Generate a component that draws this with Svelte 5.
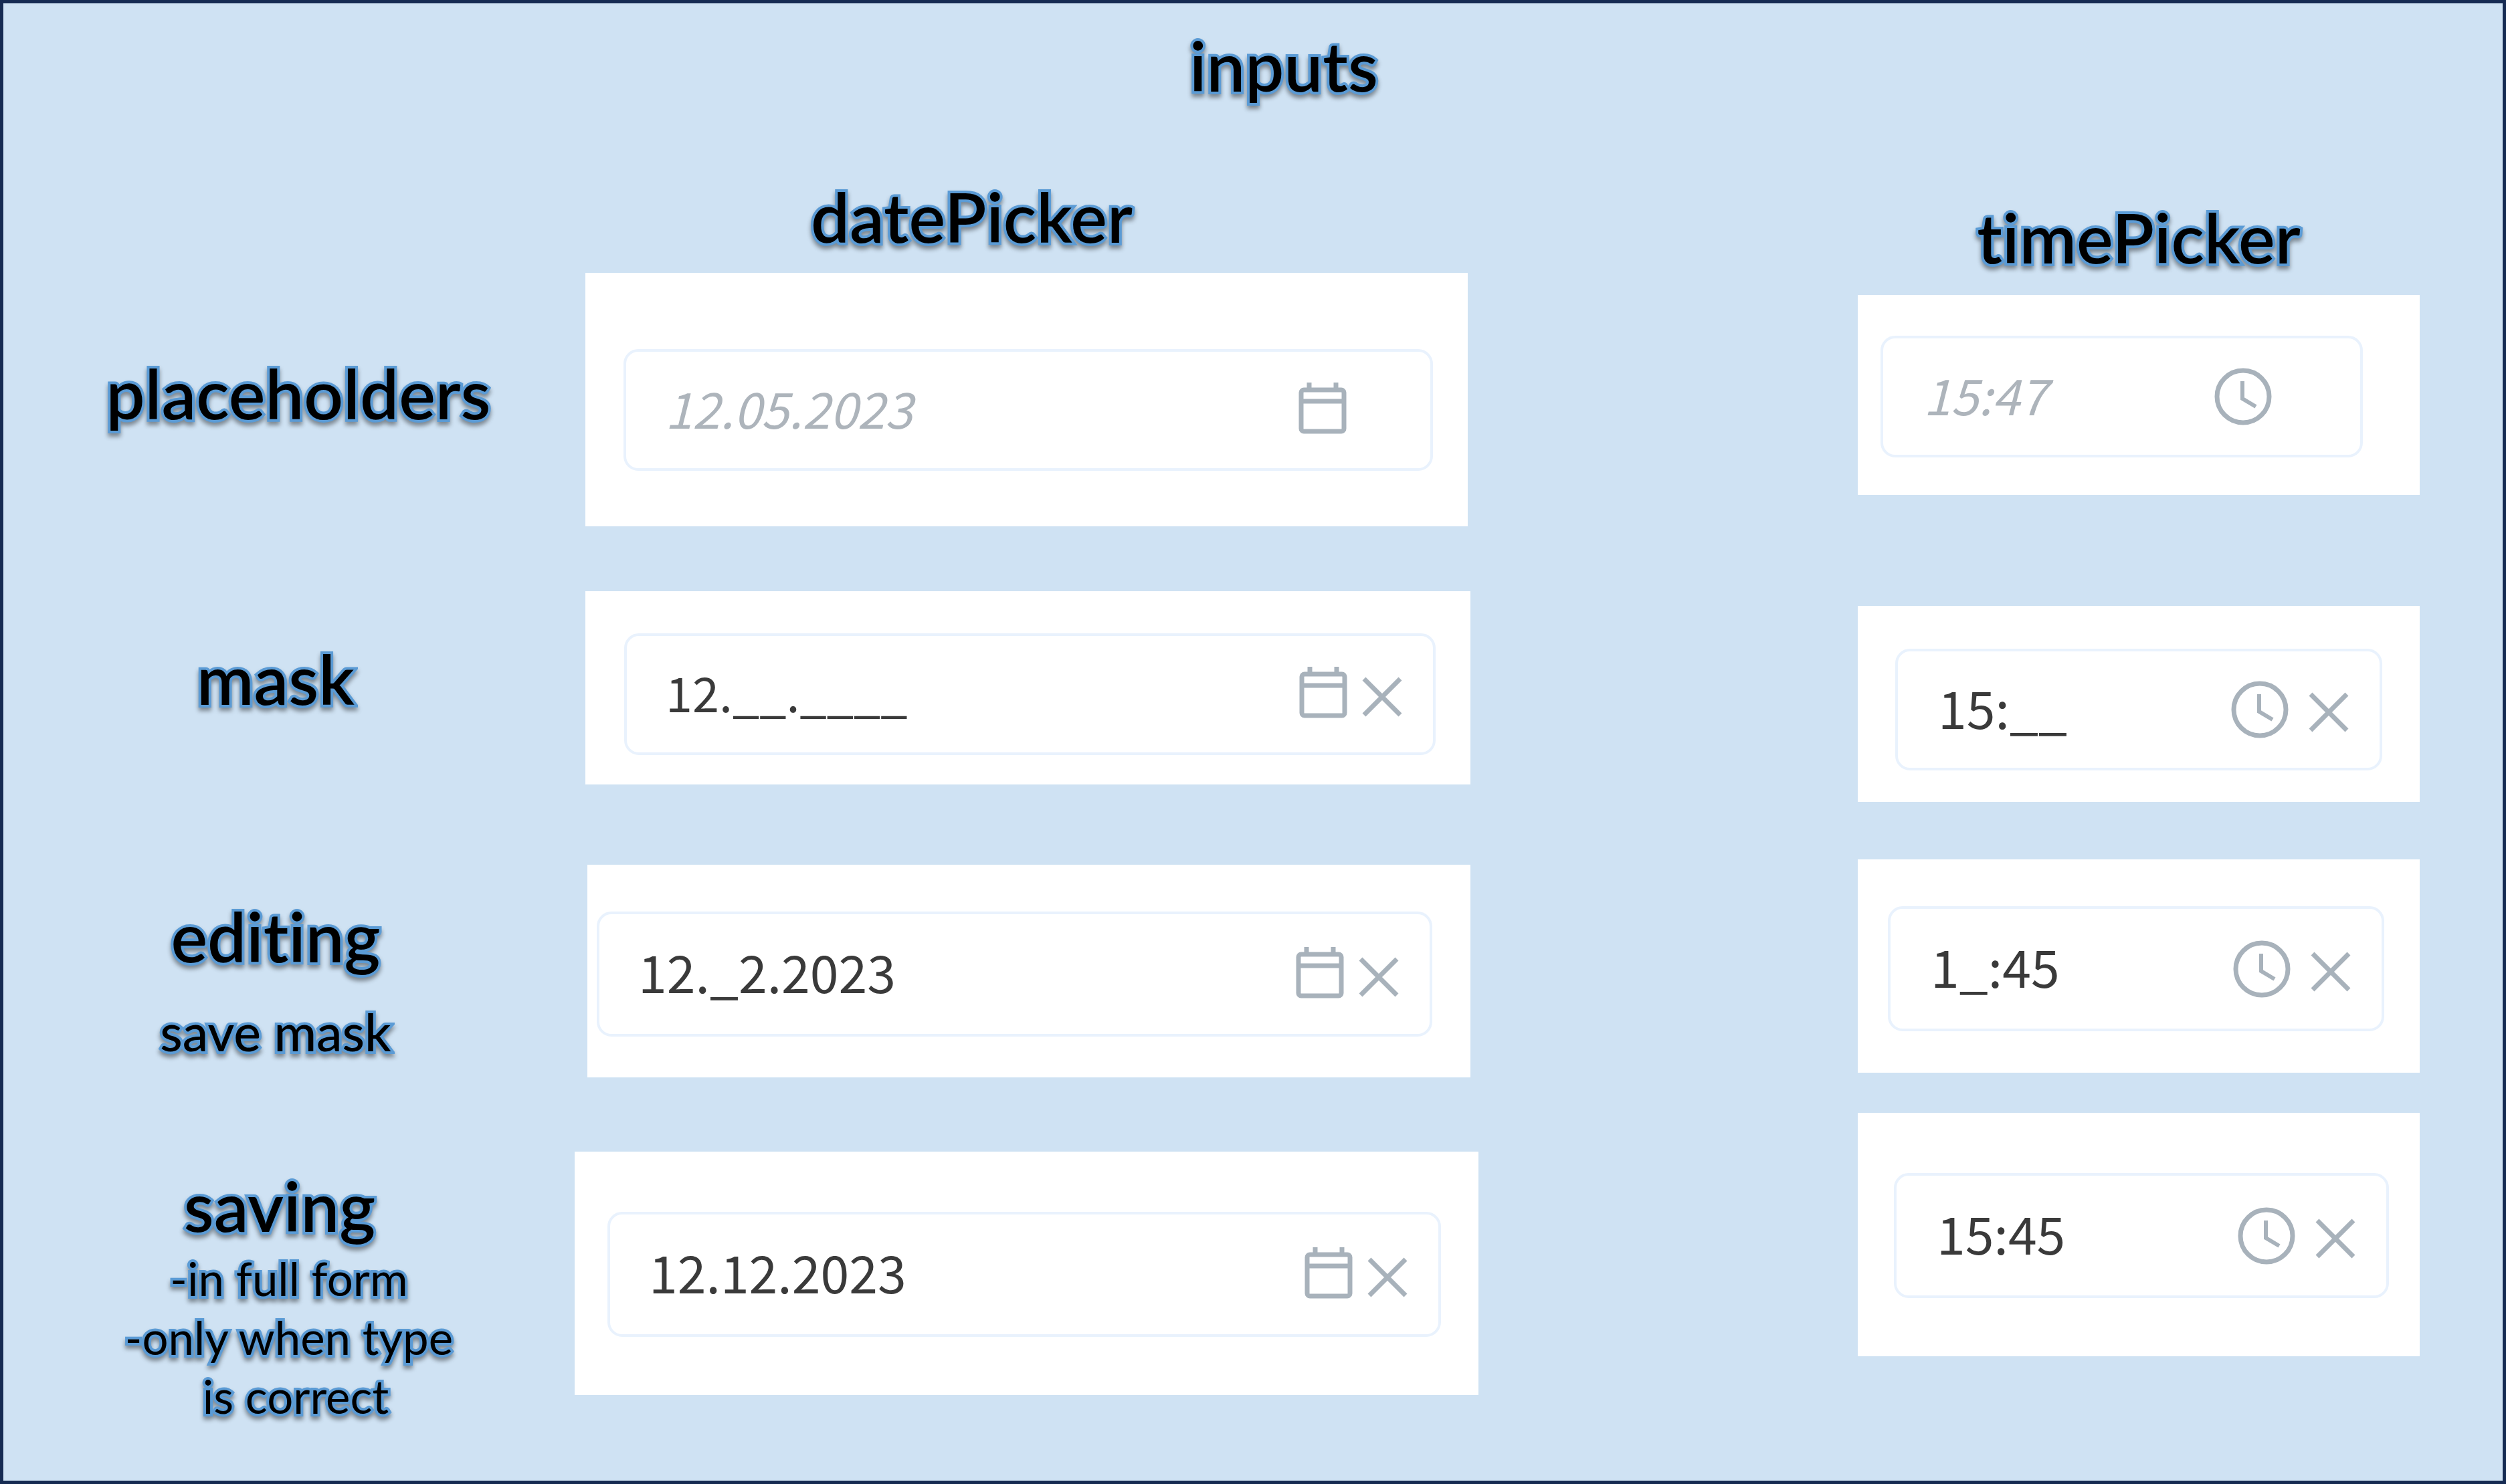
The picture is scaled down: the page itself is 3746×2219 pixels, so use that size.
<script>
  const dateFields = [
    { row: 'placeholders', value: '', placeholder: '12.05.2023' },
    { row: 'mask', value: '12.__.____' },
    { row: 'editing', value: '12._2.2023' },
    { row: 'saving', value: '12.12.2023' }
  ];
  const timeFields = [
    { row: 'placeholders', value: '', placeholder: '15:47' },
    { row: 'mask', value: '15:__' },
    { row: 'editing', value: '1_:45' },
    { row: 'saving', value: '15:45' }
  ];
</script>

{#snippet calendarIcon()}
  <svg class="calendar-icon" viewBox="0 0 72 82" aria-hidden="true">
    <rect x="4" y="11" width="64" height="62" rx="4" />
    <path d="M4 28H68M16 0V10M56 0V10" />
  </svg>
{/snippet}

{#snippet clockIcon()}
  <svg class="clock-icon" viewBox="0 0 86 86" aria-hidden="true">
    <circle cx="43" cy="43" r="39" />
    <path d="M42 20V46L62 58" />
  </svg>
{/snippet}

{#snippet picker(kind, field)}
  <div class="card {kind} {field.row}">
    <div class="field">
      <input
        type="text"
        value={field.value}
        placeholder={field.placeholder}
        aria-labelledby="{kind}-title {field.row}-title"
      />
      <button type="button" aria-label="Open {kind} picker">
        {#if kind === 'date'}
          {@render calendarIcon()}
        {:else}
          {@render clockIcon()}
        {/if}
      </button>
      {#if field.value}
        <button type="button" aria-label="Clear {kind}">
          <svg class="clear-icon" viewBox="0 0 60 68" aria-hidden="true">
            <path d="M3 11L57 65M57 11L3 65" />
          </svg>
        </button>
      {/if}
    </div>
  </div>
{/snippet}

<main>
  <h1>inputs</h1>
  <div class="columns">
    <section class="labels">
      <h3 class="placeholders" id="placeholders-title">placeholders</h3>
      <h3 class="mask" id="mask-title">mask</h3>
      <h3 class="editing" id="editing-title">editing</h3>
      <p class="hint">save mask</p>
      <h3 class="saving" id="saving-title">saving</h3>
      <p class="notes">-in full form<br />-only when type<br /><span>is correct</span></p>
    </section>

    <section class="dates">
      <h2 id="date-title">datePicker</h2>
      {#each dateFields as field}
        {@render picker('date', field)}
      {/each}
    </section>

    <section class="times">
      <h2 id="time-title">timePicker</h2>
      {#each timeFields as field}
        {@render picker('time', field)}
      {/each}
    </section>
  </div>
</main>

<style>
  :global(body) {
    margin: 0;
  }

  main {
    box-sizing: border-box;
    min-height: 100vh;
    padding-top: 32px;
    border: 5px solid #162b52;
    background: #cfe2f3;
    font-family: Lato, sans-serif;
    color: #000;
  }

  h1,
  h2,
  h3,
  p {
    margin: 0;
    text-align: center;
    -webkit-text-stroke: 8px #5b9bd5;
    paint-order: stroke fill;
    stroke-linejoin: round;
    filter: drop-shadow(0 5px 3px rgba(0, 0, 0, 0.4));
    font-variant-ligatures: none;
  }

  h1,
  h2,
  h3 {
    font-size: 103px;
    line-height: 120px;
    font-weight: 600;
  }

  h1 {
    padding-left: 92px;
  }

  p {
    line-height: 88px;
  }

  .columns {
    display: grid;
    grid-template-columns:
      minmax(0, 854fr) minmax(0, 1351fr) minmax(0, 567fr) minmax(0, 840fr)
      minmax(0, 124fr);
    align-items: start;
  }

  .times {
    grid-column: 4;
  }

  .labels .placeholders {
    padding: 370px 0 0 28px;
  }

  .labels .mask {
    padding: 307px 40px 0 0;
  }

  .labels .editing {
    padding: 265px 40px 0 0;
  }

  .labels .hint {
    padding: 39px 40px 0 0;
    font-size: 77px;
    font-weight: 500;
  }

  .labels .saving {
    padding: 156px 28px 0 0;
  }

  .labels .notes {
    padding-top: 6px;
    font-size: 69px;
    font-weight: 400;
  }

  .notes span {
    padding-left: 20px;
  }

  .dates h2 {
    padding: 106px 164px 25px 0;
  }

  .times h2 {
    padding: 137px 0 27px;
  }

  .card {
    background: #fff;
  }

  .date.placeholders {
    margin: 0 16px 97px;
    padding: 114px 52px 83px 57px;
  }

  .date.mask {
    margin: 0 12px 120px 16px;
    padding: 63px 52px 44px 58px;
  }

  .date.editing {
    margin: 0 12px 111px 19px;
    padding: 70px 57px 61px 14px;
  }

  .date.saving {
    padding: 90px 56px 87px 49px;
  }

  .time.placeholders {
    margin-bottom: 166px;
    padding: 61px 85px 56px 34px;
  }

  .time.mask {
    margin-bottom: 86px;
    padding: 64px 56px 47px;
  }

  .time.editing {
    margin-bottom: 60px;
    padding: 70px 53px 62px 45px;
  }

  .time.saving {
    padding: 90px 46px 87px 54px;
  }

  .field {
    box-sizing: border-box;
    display: flex;
    align-items: center;
    gap: 22px;
    height: 182px;
    padding: 0 46px 0 58px;
    border: 4px solid #e9f2fd;
    border-radius: 22px;
  }

  .time .field {
    gap: 30px;
    padding-left: 60px;
  }

  .editing .field,
  .saving .field {
    height: 187px;
  }

  .date.placeholders .field {
    padding-right: 125px;
  }

  .time.placeholders .field {
    padding-right: 132px;
  }

  input {
    flex: 1;
    min-width: 0;
    margin: 0;
    padding: 0 0 10px;
    border: 0;
    outline: 0;
    background: none;
    font-family: 'Noto Sans CJK JP', sans-serif;
    font-size: 77px;
    color: #3a3a3a;
  }

  .placeholders input {
    font-size: 74px;
  }

  .date.mask input {
    font-size: 72px;
  }

  input::placeholder {
    color: #adb4bb;
    font-style: italic;
    opacity: 1;
  }

  button {
    flex: none;
    display: flex;
    padding: 0;
    border: 0;
    background: none;
    cursor: pointer;
  }

  svg {
    fill: none;
    stroke: #a8b2bb;
    stroke-width: 7;
  }

  .calendar-icon {
    width: 72px;
    height: 82px;
  }

  .clock-icon {
    width: 86px;
    height: 86px;
  }

  .clock-icon path {
    stroke-width: 6;
  }

  .clear-icon {
    width: 60px;
    height: 68px;
  }
</style>
